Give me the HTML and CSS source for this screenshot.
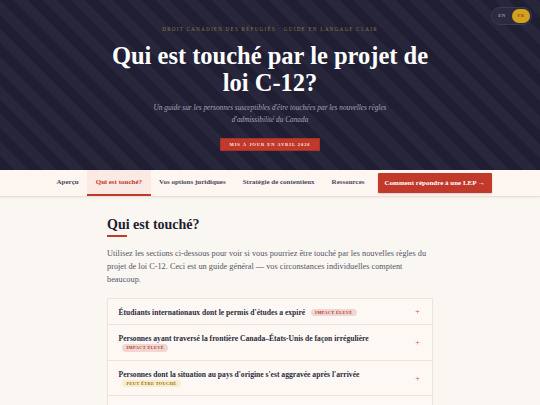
FILE: index.html
```html
<!DOCTYPE html>
<html lang="fr">
<head>
<meta charset="utf-8">
<title>Qui est touché par le projet de loi C-12?</title>
<link rel="stylesheet" href="styles.css">
</head>
<body>
<header class="hero">
  <div class="lang">
    <span class="lang-opt">EN</span>
    <span class="lang-opt lang-on">FR</span>
  </div>
  <p class="eyebrow">Droit canadien des réfugiés · Guide en langage clair</p>
  <h1 class="title">Qui est touché par le projet de<br>loi C-12?</h1>
  <p class="subtitle">Un guide sur les personnes susceptibles d'être touchées par les nouvelles règles d'admissibilité du Canada</p>
  <span class="updated">Mis à jour en avril 2026</span>
</header>
<nav class="nav">
  <a class="nav-item">Aperçu</a>
  <a class="nav-item nav-active">Qui est touché?</a>
  <a class="nav-item">Vos options juridiques</a>
  <a class="nav-item">Stratégie de contentieux</a>
  <a class="nav-item">Ressources</a>
  <a class="nav-cta">Comment répondre à une LEP →</a>
</nav>
<main class="main">
  <h2 class="section-title">Qui est touché?</h2>
  <div class="rule"></div>
  <p class="intro">Utilisez les sections ci-dessous pour voir si vous pourriez être touché par les nouvelles règles du projet de loi C-12. Ceci est un guide général — vos circonstances individuelles comptent beaucoup.</p>
  <div class="accordion">
    <div class="acc-row">
      <div class="acc-text">Étudiants internationaux dont le permis d'études a expiré <span class="badge badge-high">Impact élevé</span></div>
      <span class="plus">+</span>
    </div>
    <div class="acc-row">
      <div class="acc-text">Personnes ayant traversé la frontière Canada–États-Unis de façon irrégulière <span class="badge badge-high">Impact élevé</span></div>
      <span class="plus">+</span>
    </div>
    <div class="acc-row">
      <div class="acc-text">Personnes dont la situation au pays d'origine s'est aggravée après l'arrivée <span class="badge badge-maybe">Peut être touché</span></div>
      <span class="plus">+</span>
    </div>
    <div class="acc-row">
      <div class="acc-text">Demandeurs ayant déjà présenté une demande dans un autre pays <span class="badge badge-maybe">Peut être touché</span></div>
      <span class="plus">+</span>
    </div>
  </div>
</main>
</body>
</html>
```
FILE: styles.css
```css
* { box-sizing: border-box; }
html, body { margin: 0; padding: 0; }
body {
  background: #faf6f1;
  font-family: "Liberation Serif", "DejaVu Serif", serif;
  color: #2b2b3b;
}
.hero {
  position: relative;
  height: 170px;
  padding-top: 25px;
  text-align: center;
  background-color: #1f1e33;
  background-image: repeating-linear-gradient(45deg, rgba(255,255,255,0) 0, rgba(255,255,255,0) 10px, rgba(255,255,255,0.035) 10px, rgba(255,255,255,0.035) 20px);
}
.lang {
  position: absolute;
  top: 7px;
  left: 491px;
  width: 41px;
  height: 18px;
  display: flex;
  align-items: center;
  padding: 1px;
  gap: 1px;
  border-radius: 9px;
  background: #2a2a40;
  border: 1px solid #3a3a52;
}
.lang-opt {
  flex: 1;
  height: 14px;
  line-height: 14px;
  border-radius: 7px;
  font-size: 4.8px;
  font-weight: bold;
  color: #9a9aae;
  letter-spacing: 0.3px;
}
.lang-on { background: #d4a11e; color: #7a5a10; }
.eyebrow {
  margin: 0;
  font-size: 5.2px;
  line-height: 8px;
  letter-spacing: 1.2px;
  text-transform: uppercase;
  color: #8a774a;
}
.title {
  margin: 8.5px 0 0;
  font-size: 24.5px;
  line-height: 27px;
  font-weight: bold;
  color: #ffffff;
}
.subtitle {
  margin: 6.5px auto 0;
  max-width: 240px;
  font-size: 7.3px;
  line-height: 12px;
  font-style: italic;
  color: #a4a4b8;
}
.updated {
  display: inline-block;
  margin-top: 12px;
  height: 13px;
  padding: 0 8px;
  background: #c0392b;
  border: 1px solid #a83126;
  color: #fbe9e5;
  font-size: 4.6px;
  font-weight: bold;
  letter-spacing: 0.9px;
  text-transform: uppercase;
  line-height: 11px;
}
.nav {
  height: 27px;
  display: flex;
  justify-content: center;
  align-items: stretch;
  background: #fdf6f1;
  border-bottom: 1px solid #ecdfd4;
  box-shadow: 0 1px 2px rgba(80,50,30,0.06);
}
.nav-item {
  display: flex;
  align-items: center;
  padding: 0 8.5px;
  font-size: 7px;
  font-weight: bold;
  color: #4a4a5c;
  border-bottom: 2px solid transparent;
}
.nav-active {
  background: #fbe9e4;
  color: #c0392b;
  border-bottom-color: #c0392b;
}
.nav-cta {
  align-self: center;
  display: flex;
  align-items: center;
  height: 20px;
  margin-left: 4.5px;
  padding: 0 7px;
  background: #c0392b;
  color: #ffffff;
  font-size: 7px;
  font-weight: bold;
  border-radius: 1px;
  box-shadow: 0 1px 2px rgba(120,30,20,0.2);
}
.main {
  width: 326px;
  margin: 0 auto;
  padding-top: 20px;
}
.section-title {
  margin: 0;
  font-size: 14px;
  line-height: 16px;
  font-weight: bold;
  color: #1e1e30;
}
.rule {
  width: 20px;
  height: 2px;
  margin-top: 1.5px;
  background: #c0392b;
}
.intro {
  margin: 10px 0 0;
  font-size: 8.3px;
  line-height: 13px;
  color: #555566;
}
.accordion {
  margin-top: 12px;
  background: #fdf8f3;
  border: 1px solid #ede3d9;
  border-radius: 2px;
}
.acc-row {
  display: flex;
  align-items: center;
  gap: 10px;
  padding: 9px 10.5px 7.5px;
  border-bottom: 1px solid #ede3d9;
}
.acc-text {
  flex: 1;
  font-size: 7.6px;
  line-height: 9px;
  font-weight: bold;
  color: #2b2b3b;
}
.badge {
  display: inline-block;
  margin-left: 3.5px;
  height: 7.5px;
  line-height: 7.5px;
  padding: 0 4.5px;
  border-radius: 4px;
  font-size: 4.3px;
  letter-spacing: 0.4px;
  text-transform: uppercase;
  vertical-align: 1px;
}
.badge-high { background: #f1d6d1; color: #b23b30; }
.badge-maybe { background: #fbedc9; color: #8c6a12; }
.plus {
  width: 8px;
  text-align: center;
  font-size: 8px;
  line-height: 8px;
  color: #c4574c;
}
```
